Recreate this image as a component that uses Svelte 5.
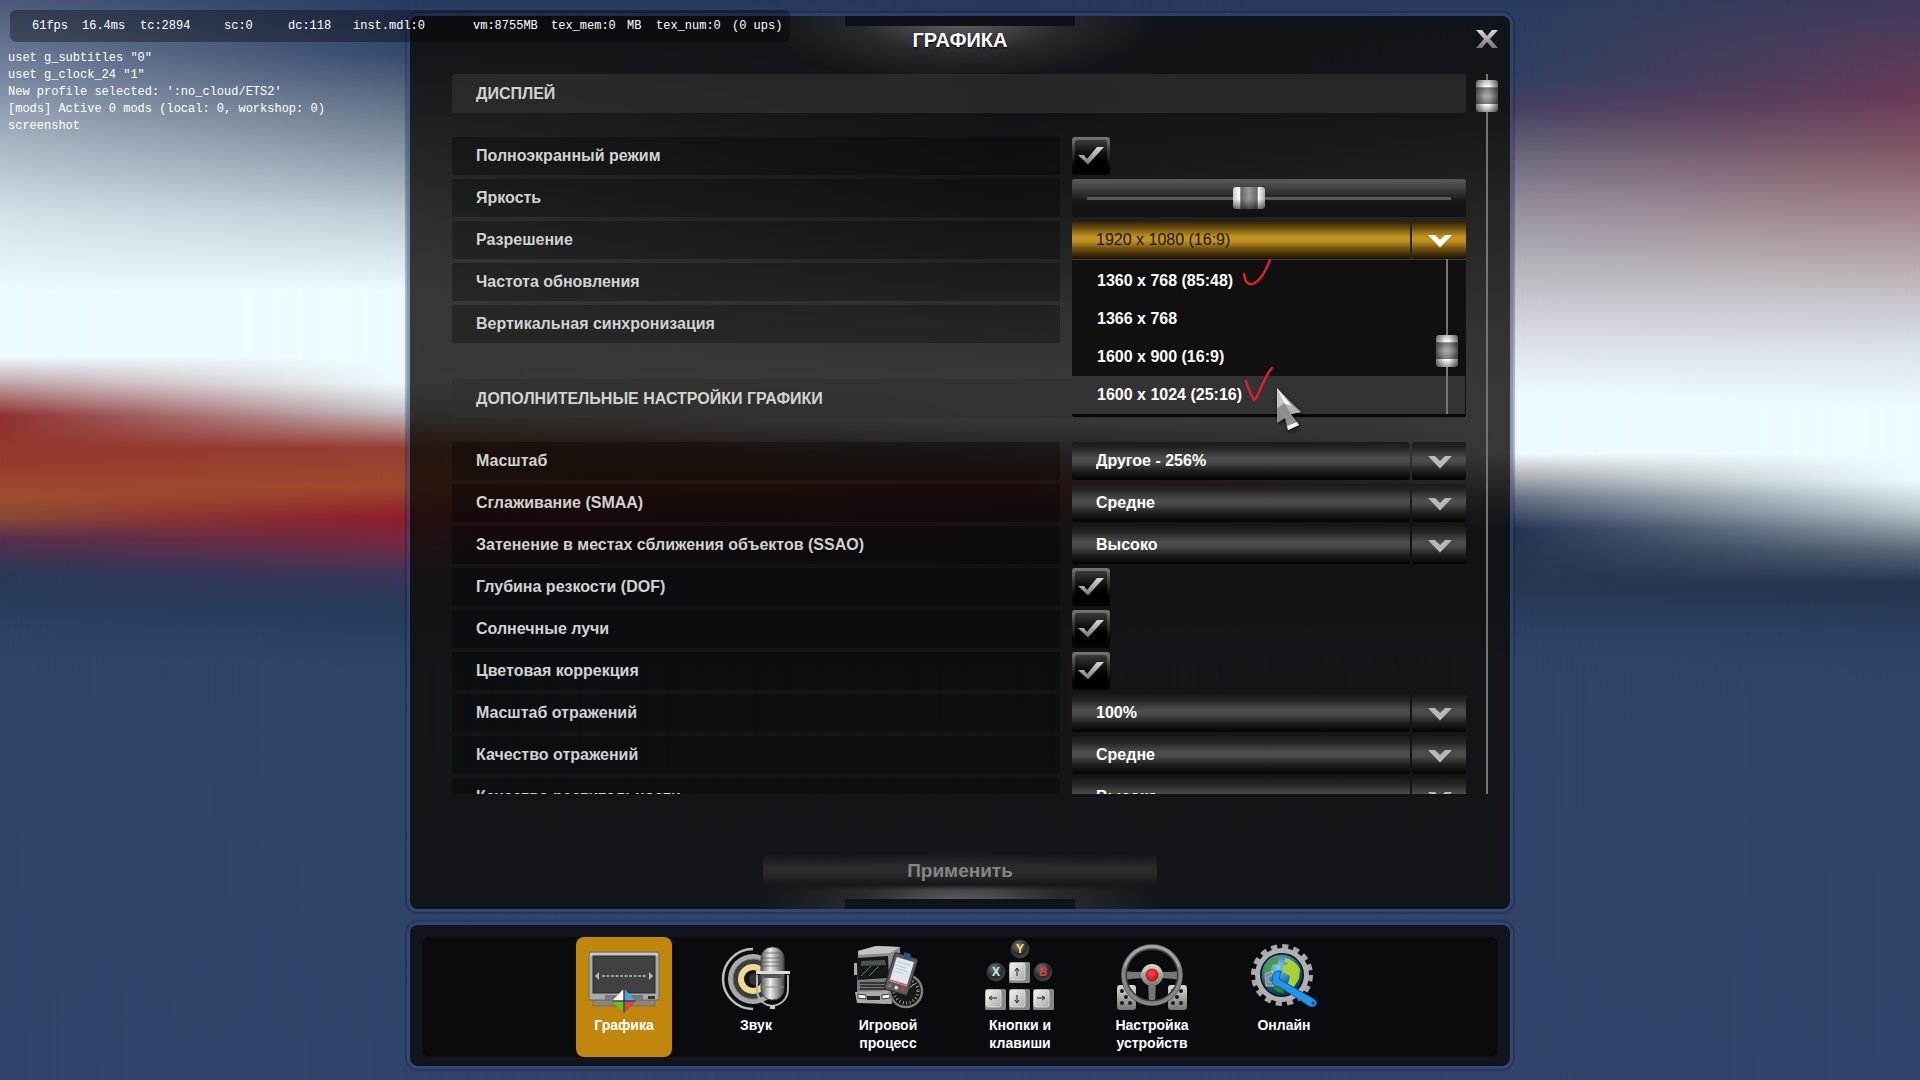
<script lang="ts">
  type Row = {
    id: string;
    label: string;
    kind: 'check' | 'range' | 'select' | 'open';
    value?: string;
  };

  const display: Row[] = [
    { id: 'fullscreen', label: 'Полноэкранный режим', kind: 'check' },
    { id: 'brightness', label: 'Яркость', kind: 'range' },
    { id: 'resolution', label: 'Разрешение', kind: 'open', value: '1920 x 1080 (16:9)' },
    { id: 'refresh', label: 'Частота обновления', kind: 'select', value: '' },
    { id: 'vsync', label: 'Вертикальная синхронизация', kind: 'select', value: '' }
  ];

  const advanced: Row[] = [
    { id: 'scaling', label: 'Масштаб', kind: 'select', value: 'Другое - 256%' },
    { id: 'smaa', label: 'Сглаживание (SMAA)', kind: 'select', value: 'Средне' },
    { id: 'ssao', label: 'Затенение в местах сближения объектов (SSAO)', kind: 'select', value: 'Высоко' },
    { id: 'dof', label: 'Глубина резкости (DOF)', kind: 'check' },
    { id: 'sunshafts', label: 'Солнечные лучи', kind: 'check' },
    { id: 'color', label: 'Цветовая коррекция', kind: 'check' },
    { id: 'mirror-scale', label: 'Масштаб отражений', kind: 'select', value: '100%' },
    { id: 'mirror-quality', label: 'Качество отражений', kind: 'select', value: 'Средне' },
    { id: 'vegetation', label: 'Качество растительности', kind: 'select', value: 'Высоко' }
  ];

  const resolutions = ['1360 x 768 (85:48)', '1366 x 768', '1600 x 900 (16:9)', '1600 x 1024 (25:16)'];
  let highlighted = '1600 x 1024 (25:16)';

  const stats = [
    '61fps', '16.4ms', 'tc:2894', 'sc:0', 'dc:118', 'inst.mdl:0',
    'vm:8755MB', 'tex_mem:0', 'MB', 'tex_num:0', '(0 ups)'
  ];

  const log = [
    'uset g_subtitles "0"',
    'uset g_clock_24 "1"',
    "New profile selected: ':no_cloud/ETS2'",
    '[mods] Active 0 mods (local: 0, workshop: 0)',
    'screenshot'
  ];

  const tabs = [
    { id: 'graphics', label: 'Графика' },
    { id: 'sound', label: 'Звук' },
    { id: 'gameplay', label: 'Игровой процесс' },
    { id: 'keys', label: 'Кнопки и клавиши' },
    { id: 'devices', label: 'Настройка устройств' },
    { id: 'online', label: 'Онлайн' }
  ];
  let activeTab = 'graphics';
</script>

{#snippet chevron()}
  <span class="arrow" aria-hidden="true">
    <svg viewBox="0 0 26 14" width="26" height="14">
      <path d="M1 1h7l5 5 5-5h7L13 13.500z" />
    </svg>
  </span>
{/snippet}

{#snippet settingRow(row: Row)}
  <div class="row">
    <label class="row-label" for={row.id}>{row.label}</label>
    <div class="control">
      {#if row.kind === 'check'}
        <span class="check">
          <input type="checkbox" id={row.id} checked />
          <svg viewBox="0 0 28 20" width="28" height="20" aria-hidden="true">
            <path d="M1 9h6l3 4L20 1h7L11 18.500z" fill="url(#steel)" />
          </svg>
        </span>
      {:else if row.kind === 'range'}
        <div class="slider">
          <input type="range" id={row.id} min="0" max="100" value="44" />
        </div>
      {:else}
        <div class="select" class:open={row.kind === 'open'}>
          <select id={row.id}><option>{row.value}</option></select>
          {@render chevron()}
        </div>
      {/if}
      {#if row.kind === 'open'}
        <div class="menu">
          <ul role="listbox" aria-label={row.label}>
            {#each resolutions as res}
              <li role="option" aria-selected={res === highlighted} class:current={res === highlighted}>{res}</li>
            {/each}
          </ul>
          <div class="scroll menu-scroll"><span class="grip"></span></div>
          <!-- marker strokes and pointer -->
          <svg class="marks" viewBox="0 0 394 158" width="394" height="158" aria-hidden="true">
            <g fill="none" stroke="#d8232a" stroke-width="2.500" stroke-linecap="round" stroke-linejoin="round">
              <path d="M172 15C173 23 176 26 181 25C189 21 193 13 198 1" />
              <path d="M174 122C176 130 181 139 182 141C186 139 187 131 192 122C195 116 197 112 200 109" />
            </g>
            <g class="pointer">
              <path d="M205 129L229 153L219 155L227 166L216 171L213 159L205 164z" fill="#8e8e8e" />
              <path d="M205 129L213 144L205 149z" fill="#c4c4c4" />
              <path d="M205 129L221 148L213 145z" fill="#fff" />
              <path d="M213 145L221 147L229 153L219 155z" fill="#b2b2b2" />
              <path d="M215 167L225 163L227 166L216 171z" fill="#f4f4f4" />
            </g>
          </svg>
        </div>
      {/if}
    </div>
  </div>
{/snippet}

<svg class="defs" width="0" height="0" aria-hidden="true">
  <defs>
    <linearGradient id="steel" x1="0" y1="0" x2="0" y2="1">
      <stop offset="0" stop-color="#dadada" />
      <stop offset="1" stop-color="#757575" />
    </linearGradient>
    <linearGradient id="steelH" x1="0" y1="0" x2="1" y2="0">
      <stop offset="0" stop-color="#555" />
      <stop offset=".4" stop-color="#eee" />
      <stop offset="1" stop-color="#4a4a4a" />
    </linearGradient>
    <linearGradient id="keycap" x1="0" y1="0" x2="1" y2="1">
      <stop offset="0" stop-color="#f4f4f4" />
      <stop offset="1" stop-color="#a8a8a8" />
    </linearGradient>
    <radialGradient id="ball" cx=".4" cy=".3" r=".8">
      <stop offset="0" stop-color="#777" />
      <stop offset=".6" stop-color="#2a2a2a" />
      <stop offset="1" stop-color="#555" />
    </radialGradient>
    <radialGradient id="redball" cx=".45" cy=".4" r=".6">
      <stop offset="0" stop-color="#ff4a40" />
      <stop offset="1" stop-color="#b80f0f" />
    </radialGradient>
    <radialGradient id="sea" cx=".4" cy=".3" r=".7">
      <stop offset="0" stop-color="#8cc8ec" />
      <stop offset=".5" stop-color="#2d7db5" />
      <stop offset="1" stop-color="#08304f" />
    </radialGradient>
  </defs>
</svg>

<div class="screen">
  <div class="sky" aria-hidden="true">
    <i class="s1"></i><i class="s2"></i><i class="s3"></i><i class="s4"></i><i class="s5"></i>
  </div>

  <main class="panel">
    <header class="panel-head">
      <h1>ГРАФИКА</h1>
      <button class="close" aria-label="Закрыть">
        <svg viewBox="0 0 22 18" width="22" height="18">
          <path d="M0 0h6l5 6 5-6h6l-8 9 8 9h-6l-5-6-5 6H0l8-9z" fill="url(#steel)" />
        </svg>
      </button>
    </header>

    <div class="content">
      <div class="list">
        <h2>ДИСПЛЕЙ</h2>
        <section class="group">
          {#each display as row}
            {@render settingRow(row)}
          {/each}
        </section>
        <h2 class="second">ДОПОЛНИТЕЛЬНЫЕ НАСТРОЙКИ ГРАФИКИ</h2>
        <section class="group">
          {#each advanced as row}
            {@render settingRow(row)}
          {/each}
        </section>
      </div>
      <div class="scroll"><span class="grip"></span></div>
    </div>

    <footer class="panel-foot">
      <button class="apply" disabled>Применить</button>
    </footer>
  </main>

  <nav class="tabs-panel">
    <div class="tabs">
      {#each tabs as tab}
        <button class="tab" class:active={tab.id === activeTab} on:click={() => (activeTab = tab.id)}>
          <svg viewBox="0 0 72 72" width="72" height="72" aria-hidden="true">
            {#if tab.id === 'graphics'}
              <rect x="5" y="62" width="62" height="6" fill="#8a8678" stroke="#555" stroke-width=".5" />
              <rect x="1" y="14" width="70" height="48" rx="2" fill="#aaa" stroke="#6b6b6b" />
              <rect x="2" y="15" width="68" height="3" fill="#c9c9c9" />
              <rect x="5" y="18" width="62" height="37" fill="#414141" stroke="#2a2a2a" />
              <rect x="17" y="57" width="38" height="5" fill="#777" />
              <rect x="60" y="58" width="7" height="3" fill="#333" />
              <path d="M14 38h44" stroke="#bbb" stroke-width="1.500" stroke-dasharray="3 1.500" />
              <path d="M7 38l4-4v8zM65 38l-4-4v8z" fill="#bbb" />
              <path d="M35.500 51v11.500H24.500z" fill="#fff" />
              <path d="M36.500 51v11.500H47.500z" fill="#45a4e6" />
              <path d="M35.500 75v-11.500H24.500z" fill="#5fc41c" />
              <path d="M36.500 75v-11.500H47.500z" fill="#d9434a" />
              <path d="M36 51v24M24.500 63h23" stroke="#222" />
            {:else if tab.id === 'sound'}
              <path d="M33 11A30 30 0 0 0 33 71" fill="none" stroke="#bcbcbc" stroke-width="2.500" />
              <circle cx="33" cy="41" r="25" fill="#a9a9a9" />
              <circle cx="33" cy="41" r="20" fill="#3c3c3c" stroke="#777" />
              <circle cx="33" cy="41" r="12" fill="#111" stroke="#eadc8c" stroke-width="6" />
              <circle cx="35" cy="41" r="6" fill="#333" />
              <rect x="41" y="9" width="23" height="53" rx="11" fill="url(#steelH)" stroke="#444" />
              <path d="M42 20h21M42 24h21M42 28h21M45 15h15" stroke="#555" stroke-width=".7" />
              <rect x="36" y="33" width="34" height="3" fill="#ddd" />
              <rect x="41" y="36" width="23" height="4" fill="#555" />
              <path d="M41 49h23" stroke="#888" />
              <path d="M37 37v14c0 10 6 16 15 17c9-1 16-7 16-17V37" fill="none" stroke="#b4b4b4" stroke-width="2" />
              <rect x="50" y="67" width="5" height="4" fill="#ccc" />
            {:else if tab.id === 'gameplay'}
              <path d="M6 13l18-5 24 1 1 48-16 9-28-4z" fill="#8d8d8d" />
              <path d="M6 13l18-5 24 1-10 6-31 2z" fill="#c4c4c4" />
              <path d="M5 20l31-2 1 22-31 2z" fill="#15181a" />
              <path d="M9 23l24-1 1 5-25 1z" fill="#4d5254" />
              <path d="M9 38l10-10M17 38l10-10" stroke="#777" />
              <path d="M2 25h3v12H2z" fill="#aaa" />
              <path d="M5 43l32-2 1 11-33 1z" fill="#777" />
              <path d="M8 45h26M8 48h26M8 51h26" stroke="#222" stroke-width="1.500" />
              <path d="M3 54l36-1 1 13-35-1z" fill="#aaa" />
              <path d="M6 56l8 1v4l-8-1zM30 57l8-1v4l-8 1z" fill="#fff" stroke="#333" />
              <rect x="15" y="58" width="13" height="4" fill="#222" />
              <circle cx="54" cy="53" r="16" fill="#171717" stroke="#7e7e7e" stroke-width="2.500" />
              <circle cx="54" cy="53" r="12" fill="none" stroke="#999" stroke-width="3" stroke-dasharray="1 2.500" />
              <path d="M54 53l8-7" stroke="#ddd" />
              <g transform="rotate(17 49 36)">
                <rect x="37" y="17" width="24" height="38" rx="2" fill="#575c5e" stroke="#292c2e" />
                <rect x="40" y="21" width="18" height="25" fill="#e2e7ee" />
                <path d="M42 25h13M42 29h10M42 32h13M42 35h9" stroke="#bcc5d5" />
                <path d="M40 45h18" stroke="#ee5360" stroke-width="1.500" />
                <rect x="46" y="14" width="7" height="6" rx="1" fill="#28558c" />
                <rect x="40" y="49" width="3" height="3" fill="#5f9b4a" />
                <rect x="47" y="49" width="3" height="3" fill="#eee" />
                <rect x="54" y="49" width="3" height="3" fill="#d33" />
              </g>
            {:else if tab.id === 'keys'}
              <g fill="url(#ball)" stroke="#3a3a3a">
                <circle cx="36" cy="11" r="9" /><circle cx="12" cy="34" r="9" /><circle cx="59" cy="34" r="9" />
              </g>
              <g class="pad">
                <text x="36" y="15" fill="#f3e35c">Y</text>
                <text x="12" y="38" fill="#c4ecf6">X</text>
                <text x="59" y="38" fill="#d93b2e">B</text>
              </g>
              {#each [[25, 24], [1, 51], [25, 51], [49, 51]] as [x, y]}
                <rect {x} {y} width="21" height="21" rx="1.500" fill="#888" />
                <rect x={x + 1} y={y + 1} width="15" height="17" rx="2" fill="url(#keycap)" stroke="#eee" stroke-width=".7" />
              {/each}
              <path d="M33 38v-7m-2 2l2-3 2 3M33 57v7m-2-2l2 3 2-3M13 60H6m2-2l-3 2 3 2M53 60h7m-2-2l3 2-3 2" fill="none" stroke="#222" />
            {:else if tab.id === 'devices'}
              {#each [1, 52] as x}
                <rect {x} y="47" width="19" height="25" rx="3" fill="url(#steel)" />
                <g fill="#1c1c1c">
                  <circle cx={x + 5} cy="53" r="2" /><circle cx={x + 13} cy="53" r="2" />
                  <circle cx={x + 9} cy="59" r="2" />
                  <circle cx={x + 5} cy="65" r="2" /><circle cx={x + 13} cy="65" r="2" />
                </g>
              {/each}
              <path d="M8 33q14 2 28 0q14 2 28 0v9q-14-3-24-1l-1 26h-6l-1-26q-10-2-24 1z" fill="#777" />
              <circle cx="36" cy="37" r="28" fill="none" stroke="#3b3b3b" stroke-width="6" />
              <circle cx="36" cy="37" r="28.500" fill="none" stroke="#858585" stroke-width="4" />
              <path d="M9 29A28 28 0 0 1 63 29" fill="none" stroke="#a8a8a8" stroke-width="2" />
              <circle cx="36" cy="37" r="11" fill="url(#steel)" />
              <circle cx="36" cy="37" r="6.500" fill="url(#redball)" />
            {:else}
              <circle cx="34" cy="37" r="28.500" fill="none" stroke="#a8a8a8" stroke-width="5" stroke-dasharray="6.200 4.990" />
              <circle cx="34" cy="37" r="24.500" fill="#111" stroke="#b0b0b0" stroke-width="5" />
              <circle cx="34" cy="37" r="20.500" fill="url(#sea)" />
              <path d="M38 20q10 3 14 11l-1 10-5 8-6-3 2-8-7-4-1-6 6-2-4-3z" fill="#a9cf35" />
              <path d="M18 26l8-7 6 1-3 6-5 1-2 7-6 2z" fill="#4a9c34" />
              <path d="M23 46l10 2 3 7q-8 1-13-9z" fill="#2f8427" />
              <path d="M17 36l8-3-1 4-4 2 1 5 4 0 1 4-8 0z" fill="#888" stroke="#ddd" stroke-width=".6" />
              <path d="M25 36q3-4 8-3l-2 8 5 3 30 17q4 3 2 6q-3 3-7 1L32 49q-6 0-8-5z" fill="#2295e8" stroke="#0a5da8" />
              <circle cx="65" cy="65" r="1.500" fill="#08345e" />
            {/if}
          </svg>
          <span class="tab-label">{tab.label}</span>
        </button>
      {/each}
    </div>
  </nav>

  <div class="stats">
    {#each stats as s}<span>{s}</span>{/each}
  </div>
  <div class="log">
    {#each log as line}<p>{line}</p>{/each}
  </div>
</div>

<style>
  :global(body) {
    margin: 0;
    background: #304366;
  }

  .defs {
    position: absolute;
  }

  .screen {
    position: relative;
    display: flex;
    flex-direction: column;
    align-items: center;
    gap: 16px;
    box-sizing: border-box;
    min-height: 100vh;
    padding: 16px 0 14px;
    overflow: hidden;
    font-family: "Liberation Sans", Arial, sans-serif;
    font-size: 16px;
    font-weight: bold;
    color: #d2d2d2;
  }

  button,
  select {
    font: inherit;
    border: 0;
    cursor: pointer;
  }

  /* Blurred backdrop: vertical gradients cross-faded from left to right */
  .sky,
  .sky i {
    position: absolute;
    inset: 0;
  }

  .s1 {
    background: linear-gradient(#4b5a7b 0%, #7887a0 7%, #a8b4c1 13%, #d5e2ea 20%, #edfbff 27%, #edfbff 33%, #c9b7bb 35%, #8f3030 38.5%, #983a2c 43%, #a04f2f 46%, #874838 48%, #52304e 50%, #283a58 53.5%, #304467 61%, #32436a 100%);
  }

  .s2 {
    background: linear-gradient(#293b60 0%, #374a6c 5%, #66758a 10%, #8996a5 14%, #c0ccd5 20%, #edfbff 27%, #edfbff 35.5%, #c8c8cc 38%, #953e34 41.5%, #a04a2c 45%, #8d1c2c 48%, #702a42 50.5%, #40345a 53%, #283a5a 56%, #304467 62%, #32436a 100%);
    mask-image: linear-gradient(90deg, transparent 0%, #000 21%);
  }

  .s3 {
    background: linear-gradient(#27385c 0%, #27385c 10%, #404a68 17%, #8d93a2 24%, #d8e2e8 30%, #edfbff 35%, #edfbff 39%, #8a6a6a 42%, #8a2c2c 45%, #4c2840 49%, #283654 53%, #304467 62%, #32436a 100%);
    mask-image: linear-gradient(90deg, transparent 21%, #000 52%);
  }

  .s4 {
    background: linear-gradient(#2a3c5e 0%, #303f61 7%, #464162 10%, #6a6478 14%, #958d9c 19%, #b8b6bd 25%, #dadbe3 31%, #edfbff 36.5%, #edfbff 42%, #c2c4c6 43.5%, #697585 46%, #263555 49%, #263753 53%, #304467 61%, #32436a 100%);
    mask-image: linear-gradient(90deg, transparent 52%, #000 78%);
  }

  .s5 {
    background: linear-gradient(#3f395b 0%, #543b58 4%, #693b58 9%, #885e6c 15%, #a98f97 21%, #c5bec6 27%, #dce6ee 33%, #edfbff 38%, #edfbff 44.500%, #b8c4ca 47.500%, #5a6776 51%, #25344f 54%, #2b3e5e 58%, #304467 63%, #32436a 100%);
    mask-image: linear-gradient(90deg, transparent 79%, #000 100%);
  }

  .panel,
  .tabs-panel {
    position: relative;
    box-sizing: border-box;
    width: 1100px;
    max-width: 100%;
    border-radius: 8px;
    background: rgba(11, 11, 7, .81);
    box-shadow: 0 0 0 3px rgba(70, 100, 165, .35), 0 0 1px 5px rgba(15, 25, 55, .3);
  }

  .panel {
    display: flex;
    flex: 1;
    flex-direction: column;
  }

  /* Notches with their light, top and bottom */
  .panel-head,
  .panel-foot {
    display: flex;
    justify-content: center;
    background-repeat: no-repeat;
  }

  .panel-head {
    position: relative;
    height: 58px;
    background-image: linear-gradient(#0f1115, #0f1115), radial-gradient(closest-side, rgba(170, 170, 170, .5), rgba(110, 110, 110, .25) 50%, transparent);
    background-size: 230px 10px, 400px 120px;
    background-position: center top, center -54px;
  }

  h1 {
    margin: 14px 0 0;
    font-size: 20px;
    line-height: 20px;
    color: #fff;
    text-shadow: 0 1px 2px #000;
  }

  .close {
    position: absolute;
    top: 14px;
    right: 12px;
    display: flex;
    padding: 0;
    background: none;
  }

  .panel-foot {
    height: 115px;
    background-image: linear-gradient(#10131a, #10131a), radial-gradient(closest-side, rgba(170, 170, 170, .5), rgba(110, 110, 110, .25) 50%, transparent);
    background-size: 230px 10px, 400px 100px;
    background-position: center bottom, center 58px;
  }

  .apply {
    width: 394px;
    height: 38px;
    margin-top: 58px;
    font-size: 19px;
    color: #858585;
    background: linear-gradient(transparent 5%, #2b2c2d 45%, #2b2c2d 55%, #15171a 85%, transparent);
  }

  .content {
    display: flex;
    flex: 1 1 720px;
    gap: 10px;
    min-height: 0;
    padding: 0 12px 0 42px;
  }

  .list {
    flex: 1;
    height: 720px;
    overflow: hidden;
  }

  h2 {
    margin: 0 0 24px;
    padding-left: 24px;
    border-radius: 3px;
    font-size: 16px;
    line-height: 39px;
    background: rgba(49, 48, 47, .7);
  }

  .second {
    margin-top: 36px;
  }

  .group {
    display: flex;
    flex-direction: column;
    gap: 4px;
  }

  .row {
    display: grid;
    grid-template-columns: minmax(0, 608fr) minmax(0, 394fr);
    gap: 12px;
    height: 38px;
  }

  .row-label {
    padding-left: 24px;
    border-radius: 3px;
    line-height: 38px;
    background: rgba(0, 0, 0, .3);
  }

  .control {
    position: relative;
  }

  .check {
    display: grid;
    place-items: center;
    box-sizing: border-box;
    width: 38px;
    height: 38px;
    padding: 3px;
    border-radius: 3px;
    background: linear-gradient(#777, #333 40%, #050505 75%);
  }

  .check input,
  .check svg {
    grid-area: 1 / 1;
  }

  .check input {
    appearance: none;
    width: 32px;
    height: 32px;
    margin: 0;
    border-radius: 3px;
    background: linear-gradient(#3a3a3a, #111 40%, #000 65%);
  }

  .check svg {
    pointer-events: none;
  }

  .slider {
    display: flex;
    align-items: center;
    height: 38px;
    padding: 0 15px;
    border-radius: 3px;
    background: linear-gradient(#5a5a5a, #404040 25%, #151515 60%, #101112);
  }

  .slider input {
    appearance: none;
    width: 100%;
    height: 22px;
    margin: 0;
    background: linear-gradient(#5a5a5a, #5a5a5a) center / 100% 3px no-repeat;
  }

  .slider input::-webkit-slider-thumb {
    appearance: none;
    width: 32px;
    height: 22px;
    border-radius: 3px;
    background:
      linear-gradient(transparent, transparent 55%, rgba(0, 0, 0, .55)),
      linear-gradient(90deg, #ccc, #fff 22%, #666 24%, #999 50%, #666 76%, #fff 78%, #aaa);
  }

  .select {
    display: grid;
    grid-template-columns: minmax(0, 1fr) 54px;
    gap: 2px;
    height: 38px;
  }

  .select select,
  .arrow {
    border-radius: 3px;
    background: linear-gradient(#1a1a1a 0%, #232323 15%, #4c4c4c 42%, #4c4c4c 52%, #202020 75%, #020202 100%);
  }

  .select select {
    appearance: none;
    padding: 0 24px 2px;
    color: #fff;
  }

  .arrow {
    display: grid;
    place-items: center;
    padding: 2px 0 0 2px;
    fill: #b9b9b9;
  }

  .open select,
  .open .arrow {
    background: linear-gradient(#2a1e05 0%, #5e450d 15%, #c2941f 42%, #c2941f 52%, #6a4c0e 75%, #171003 100%);
  }

  .open select {
    font-weight: normal;
    color: #1d1503;
  }

  .open .arrow {
    fill: #fff;
  }

  .menu {
    position: absolute;
    z-index: 2;
    top: 100%;
    left: 0;
    right: 0;
    display: flex;
    padding-bottom: 3px;
    border-radius: 0 0 3px 3px;
    background: #101010;
    box-shadow: inset 0 1px #3a3a3a, inset 0 -3px #070707;
  }

  .menu ul {
    flex: 1;
    margin: 0;
    padding: 3px 0 0;
    list-style: none;
  }

  .menu li {
    padding-left: 25px;
    line-height: 38px;
    color: #fff;
  }

  .menu .current {
    background: #333;
    box-shadow: 29px 0 #333;
  }

  .scroll {
    width: 22px;
    height: 714px;
    padding-top: 6px;
    background: linear-gradient(#747474, #747474) center top / 2px 100% no-repeat;
  }

  .menu-scroll {
    position: relative;
    height: auto;
    margin-right: 8px;
    padding-top: 0;
  }

  .menu-scroll .grip {
    margin-top: 76px;
  }

  .grip {
    display: block;
    height: 32px;
    border-radius: 3px;
    background:
      linear-gradient(90deg, rgba(0, 0, 0, .5), transparent 40%, transparent 60%, rgba(0, 0, 0, .55)),
      linear-gradient(#bbb, #fff 22%, #777 24%, #aaa 50%, #777 74%, #fff 76%, #999);
  }

  .marks {
    position: absolute;
    top: 0;
    left: 0;
    overflow: visible;
    pointer-events: none;
  }

  .pointer {
    filter: drop-shadow(1px 2px 2px rgba(0, 0, 0, .7));
  }

  .tabs-panel {
    padding: 12px 12px 9px;
    background: rgba(14, 14, 19, .88);
  }

  .tabs {
    display: flex;
    justify-content: center;
    gap: 36px;
    padding-right: 12px;
    border-radius: 8px;
    background: rgba(5, 6, 7, .65);
  }

  .tab {
    display: flex;
    flex-direction: column;
    align-items: center;
    width: 96px;
    height: 120px;
    padding: 1px 0 0;
    border-radius: 8px;
    color: #fff;
    background: none;
  }

  .tab.active {
    background: #c1870d;
  }

  .tab svg {
    flex: none;
    overflow: visible;
  }

  .tab-label {
    margin-top: 6px;
    font-size: 14px;
    line-height: 18px;
  }

  .pad {
    font-size: 12px;
    text-anchor: middle;
  }

  .stats,
  .log {
    position: absolute;
    font-family: "Liberation Mono", monospace;
    font-size: 12px;
    font-weight: normal;
    line-height: 17px;
    color: #fff;
    white-space: pre;
  }

  .stats {
    top: 10px;
    left: 10px;
    display: grid;
    grid-template-columns: 50px 58px 84px 64px 65px 120px 78px 76px 29px 76px 58px;
    padding: 8px 0 7px 22px;
    border-radius: 6px;
    background: rgba(0, 0, 0, .35);
  }

  .log {
    top: 50px;
    left: 8px;
  }

  .log p {
    margin: 0;
  }
</style>
